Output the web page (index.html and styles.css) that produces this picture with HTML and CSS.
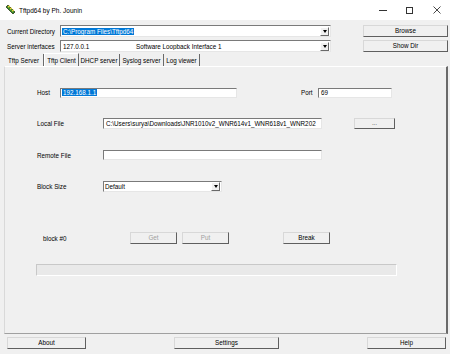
FILE: index.html
```html
<!DOCTYPE html>
<html>
<head>
<meta charset="utf-8">
<link rel="stylesheet" href="styles.css">
</head>
<body>
<div class="window">
  <div class="titlebar">
    <svg class="appicon" width="11" height="10" viewBox="0 0 11 10">
      <path d="M1 2 L3 0 L10 7 L8 9 Z" fill="#3a8a2a" stroke="#2c3a1a" stroke-width="0.8"/>
      <path d="M3.2 2.2 L4.6 0.8 M5.2 4.2 L6.6 2.8 M7.2 6.2 L8.6 4.8" stroke="#f2d840" stroke-width="1.4"/>
    </svg>
    <span class="title">Tftpd64 by Ph. Jounin</span>
    <div class="controls">
      <span class="ctl"><span class="min"></span></span>
      <span class="ctl"><span class="max"></span></span>
      <span class="ctl">
        <svg width="8" height="8" viewBox="0 0 8 8"><path d="M0.5 0.5 L7.5 7.5 M7.5 0.5 L0.5 7.5" stroke="#333" stroke-width="0.9"/></svg>
      </span>
    </div>
  </div>

  <div class="top">
    <div class="toprow">
      <span class="toplbl">Current Directory</span>
      <div class="combo topcombo">
        <span class="ctext"><span class="hl">C:\Program Files\Tftpd64</span></span>
        <span class="arrow"></span>
      </div>
      <button class="btn topbtn">Browse</button>
    </div>
    <div class="toprow">
      <span class="toplbl">Server interfaces</span>
      <div class="combo topcombo">
        <span class="ctext"><span class="ip">127.0.0.1</span><span>Software Loopback Interface 1</span></span>
        <span class="arrow"></span>
      </div>
      <button class="btn topbtn">Show Dir</button>
    </div>
  </div>

  <div class="tabs">
    <span class="tab t1">Tftp Server</span>
    <span class="tab t2 active">Tftp Client</span>
    <span class="tab t3">DHCP server</span>
    <span class="tab t4">Syslog server</span>
    <span class="tab t5">Log viewer</span>
  </div>

  <div class="panel">
    <div class="row r-host">
      <span class="lbl lbl-host">Host</span>
      <div class="field f-host"><span class="hl">192.168.1.1</span></div>
      <span class="lbl lbl-port">Port</span>
      <div class="field f-port">69</div>
    </div>
    <div class="row r-local">
      <span class="lbl lbl-wide">Local File</span>
      <div class="field f-file">C:\Users\surya\Downloads\JNR1010v2_WNR614v1_WNR618v1_WNR202</div>
      <button class="btn dots">...</button>
    </div>
    <div class="row r-remote">
      <span class="lbl lbl-wide">Remote File</span>
      <div class="field f-file"></div>
    </div>
    <div class="row r-block">
      <span class="lbl lbl-wide">Block Size</span>
      <div class="combo f-block">
        <span class="ctext">Default</span>
        <span class="arrow"></span>
      </div>
    </div>
    <div class="row r-actions">
      <span class="lbl lbl-blk">block #0</span>
      <button class="btn act disabled">Get</button>
      <button class="btn act disabled put">Put</button>
      <button class="btn act brk">Break</button>
    </div>
    <div class="progress"></div>
  </div>

  <div class="footer">
    <button class="btn fbtn about">About</button>
    <button class="btn fbtn settings">Settings</button>
    <button class="btn fbtn help">Help</button>
  </div>
</div>
</body>
</html>
```

FILE: styles.css
```css
* { box-sizing: border-box; }

html, body {
  margin: 0;
  padding: 0;
  background: #f0f0f0;
}

body {
  width: 450px;
  height: 354px;
  overflow: hidden;
  font-family: "Liberation Sans", Arial, sans-serif;
  font-size: 6.3px;
  color: #000;
}

.window {
  width: 450px;
  height: 354px;
  display: flex;
  flex-direction: column;
  background: #f0f0f0;
}

/* title bar */
.titlebar {
  height: 20px;
  background: #fff;
  display: flex;
  align-items: center;
  padding-left: 5px;
  flex-shrink: 0;
}

.appicon { flex-shrink: 0; }

.title {
  margin-left: 3px;
  font-size: 6.5px;
  color: #000;
}

.controls {
  margin-left: auto;
  display: flex;
  height: 20px;
}

.ctl {
  width: 27px;
  height: 20px;
  display: flex;
  align-items: center;
  justify-content: center;
}

.min {
  display: block;
  width: 8px;
  height: 1px;
  background: #333;
}

.max {
  display: block;
  width: 7px;
  height: 7px;
  border: 1px solid #333;
}

/* top section */
.top {
  padding: 5px 0 0 7px;
  display: flex;
  flex-direction: column;
  gap: 3px;
  flex-shrink: 0;
}

.toprow {
  display: flex;
  align-items: center;
  height: 12px;
}

.toplbl {
  width: 53px;
  white-space: nowrap;
}

.combo {
  position: relative;
  background: #fff;
  border-top: 1px solid #7a7a7a;
  border-left: 1px solid #7a7a7a;
  border-right: 1px solid #e6e6e6;
  border-bottom: 1px solid #e6e6e6;
  display: flex;
  align-items: center;
  overflow: hidden;
}

.topcombo {
  width: 271px;
  height: 12px;
}

.ctext {
  flex: 1;
  padding-left: 1px;
  white-space: nowrap;
  overflow: hidden;
  display: flex;
}

.hl {
  background: #0078d7;
  color: #fff;
  padding: 0 1px;
}

.ip { width: 74px; padding-left: 1px; }

.arrow {
  width: 9px;
  height: 9px;
  margin-right: 1px;
  background: #f0f0f0;
  border-top: 1px solid #fff;
  border-left: 1px solid #fff;
  border-right: 1px solid #696969;
  border-bottom: 1px solid #696969;
  flex-shrink: 0;
  display: flex;
  align-items: center;
  justify-content: center;
}

.arrow::after {
  content: "";
  border-left: 2.5px solid transparent;
  border-right: 2.5px solid transparent;
  border-top: 3px solid #000;
}

.btn {
  font-family: inherit;
  font-size: 6.3px;
  color: #000;
  background: #f0f0f0;
  border-top: 1px solid #d8d8d8;
  border-left: 1px solid #d8d8d8;
  border-right: 1px solid #5f5f5f;
  border-bottom: 1px solid #5f5f5f;
  padding: 0;
  margin: 0;
  line-height: 1;
  display: flex;
  align-items: center;
  justify-content: center;
}

.topbtn {
  margin-left: 32px;
  width: 85px;
  height: 12px;
}

/* tabs */
.tabs {
  margin-top: 1px;
  height: 13px;
  display: flex;
  align-items: flex-end;
  padding-left: 4px;
  flex-shrink: 0;
}

.tab {
  height: 12px;
  display: flex;
  align-items: center;
  justify-content: center;
  border-right: 1px solid #6a6a6a;
  white-space: nowrap;
}

.tab.active {
  height: 13px;
  background: #f0f0f0;
  border-top: 1px solid #fff;
  border-left: 1px solid #fff;
  border-right: 1px solid #6a6a6a;
}

.t1 { width: 40px; }
.t2 { width: 35px; }
.t3 { width: 41px; }
.t4 { width: 44px; }
.t5 { width: 36px; }

/* panel */
.panel {
  margin-left: 4px;
  width: 444px;
  height: 268px;
  border-top: 1px solid #fff;
  border-left: 1px solid #d9d9d9;
  border-right: 2px solid #6a6a6a;
  border-bottom: 1px solid #a0a0a0;
  display: flex;
  flex-direction: column;
  padding-left: 32px;
  flex-shrink: 0;
}

.row {
  display: flex;
  align-items: center;
}

.lbl { white-space: nowrap; }

.field {
  background: #fff;
  border-top: 1px solid #7a7a7a;
  border-left: 1px solid #7a7a7a;
  border-right: 1px solid #e6e6e6;
  border-bottom: 1px solid #e6e6e6;
  white-space: nowrap;
  overflow: hidden;
  display: flex;
  align-items: center;
  padding-left: 1px;
}

.r-host { margin-top: 20px; height: 11px; }
.lbl-host { width: 23px; }
.f-host { width: 177px; height: 10px; }
.lbl-port { margin-left: 64px; width: 17px; }
.f-port { width: 74px; height: 10px; padding-left: 2px; }

.r-local { margin-top: 19px; height: 12px; }
.lbl-wide { width: 66px; }
.f-file { width: 219px; height: 11px; padding-left: 2px; }
.r-remote .f-file { height: 10px; }
.dots { margin-left: 32px; width: 41px; height: 11px; color: #555; }

.r-remote { margin-top: 21px; height: 10px; }

.r-block { margin-top: 21px; height: 11px; }
.f-block { width: 119px; height: 11px; }

.r-actions { margin-top: 40px; height: 12px; }
.lbl-blk { margin-left: 6px; width: 87px; }
.act { width: 47px; height: 12px; }
.put { margin-left: 5px; }
.brk { margin-left: 54px; }
.disabled { color: #a0a0a0; }

.progress {
  margin-top: 20px;
  margin-left: -1px;
  width: 361px;
  height: 12px;
  border-top: 1px solid #c8c8c8;
  border-left: 1px solid #c8c8c8;
  border-right: 1px solid #fff;
  border-bottom: 1px solid #fff;
  background: #e9e9e9;
}

/* footer */
.footer {
  margin-top: 3px;
  display: flex;
  justify-content: space-between;
  padding: 0 4px 0 7px;
  height: 12px;
  flex-shrink: 0;
}

.about { width: 79px; height: 12px; }
.settings { width: 105px; height: 12px; }
.help { width: 79px; height: 12px; }
```
